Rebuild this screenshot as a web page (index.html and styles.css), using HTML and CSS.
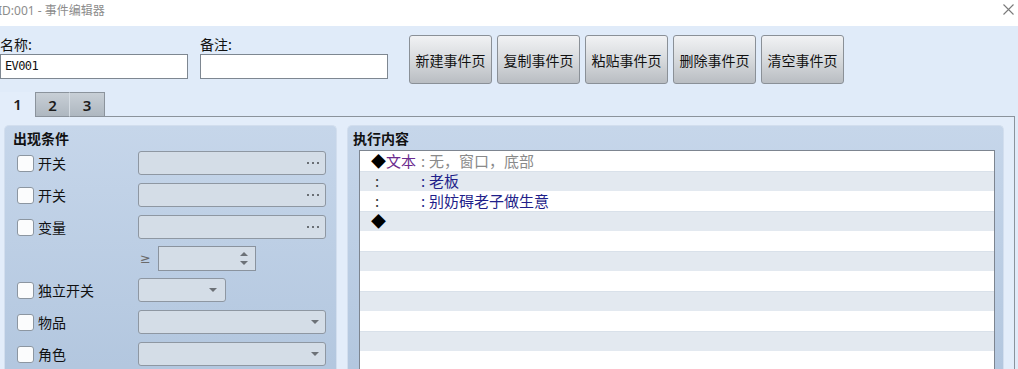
FILE: index.html
```html
<!DOCTYPE html>
<html lang="zh-CN">
<head>
    <meta charset="UTF-8">
    <meta name="viewport" content="width=device-width, initial-scale=1.0">
    <title>ID:001 - 事件编辑器</title>
    <link rel="stylesheet" href="styles.css">
</head>
<body>
    <div class="titlebar">
        <span class="title">ID:001 - 事件编辑器</span>
        <svg class="close" width="11" height="11" viewBox="0 0 11 11">
            <path d="M0.5 0.5 L10.5 10.5 M10.5 0.5 L0.5 10.5" stroke="#7a7a7a" stroke-width="1.1" fill="none"/>
        </svg>
    </div>

    <div class="main">
        <div class="top-row">
            <div class="field-group">
                <div class="label">名称:</div>
                <div class="text-input">EV001</div>
            </div>
            <div class="field-group second">
                <div class="label">备注:</div>
                <div class="text-input"></div>
            </div>
            <div class="buttons">
                <button class="btn">新建事件页</button>
                <button class="btn">复制事件页</button>
                <button class="btn">粘贴事件页</button>
                <button class="btn">删除事件页</button>
                <button class="btn">清空事件页</button>
            </div>
        </div>

        <div class="tabs">
            <div class="tab active">1</div>
            <div class="tab">2</div>
            <div class="tab last">3</div>
            <div class="tab-fill"></div>
        </div>

        <div class="tab-page">
            <!-- 出现条件 -->
            <div class="panel cond">
                <div class="panel-title">出现条件</div>
                <div class="cond-rows">
                    <div class="cond-row">
                        <div class="check-col"><span class="checkbox"></span>开关</div>
                        <div class="select wide"><span class="dots"><i></i><i></i><i></i></span></div>
                    </div>
                    <div class="cond-row">
                        <div class="check-col"><span class="checkbox"></span>开关</div>
                        <div class="select wide"><span class="dots"><i></i><i></i><i></i></span></div>
                    </div>
                    <div class="cond-row">
                        <div class="check-col"><span class="checkbox"></span>变量</div>
                        <div class="select wide"><span class="dots"><i></i><i></i><i></i></span></div>
                    </div>
                    <div class="cond-row spin-row">
                        <div class="check-col"></div>
                        <span class="ge">≥</span>
                        <div class="spin">
                            <span class="spin-arrows">
                                <span class="arrow up"></span>
                                <span class="arrow down"></span>
                            </span>
                        </div>
                    </div>
                    <div class="cond-row">
                        <div class="check-col"><span class="checkbox"></span>独立开关</div>
                        <div class="select short"><span class="arrow down"></span></div>
                    </div>
                    <div class="cond-row">
                        <div class="check-col"><span class="checkbox"></span>物品</div>
                        <div class="select wide"><span class="arrow down"></span></div>
                    </div>
                    <div class="cond-row">
                        <div class="check-col"><span class="checkbox"></span>角色</div>
                        <div class="select wide"><span class="arrow down"></span></div>
                    </div>
                </div>
            </div>

            <!-- 执行内容 -->
            <div class="panel exec">
                <div class="panel-title">执行内容</div>
                <div class="cmd-list">
                    <div class="cmd">
                        <span class="head"><span class="dia">◆</span><span class="kw">文本</span></span><span class="sep gray">:</span><span class="gray">无，窗口，底部</span>
                    </div>
                    <div class="cmd">
                        <span class="head"><span class="cont">:</span></span><span class="sep">:</span><span class="arg">老板</span>
                    </div>
                    <div class="cmd">
                        <span class="head"><span class="cont">:</span></span><span class="sep">:</span><span class="arg">别妨碍老子做生意</span>
                    </div>
                    <div class="cmd">
                        <span class="head"><span class="dia">◆</span></span>
                    </div>
                    <div class="cmd"></div>
                    <div class="cmd"></div>
                    <div class="cmd"></div>
                    <div class="cmd"></div>
                    <div class="cmd"></div>
                    <div class="cmd"></div>
                    <div class="cmd"></div>
                    <div class="cmd"></div>
                </div>
            </div>
        </div>
    </div>
</body>
</html>
```

FILE: styles.css
```css
body {
    margin: 0;
    width: 1018px;
    height: 369px;
    overflow: hidden;
    font-family: "Noto Sans CJK SC", "Noto Sans", sans-serif;
    font-size: 14px;
    color: #111;
    background: #e0ebf9;
}
.titlebar {
    height: 26px;
    background: #ffffff;
    display: flex;
    justify-content: space-between;
    align-items: flex-start;
}
.title {
    margin-left: -2px;
    font-family: "Noto Sans", "Noto Sans CJK SC", sans-serif;
    font-size: 12px;
    line-height: 22px;
    color: #8c8c8c;
}
.close {
    margin: 4px 4px 0 0;
}
.top-row {
    display: flex;
    align-items: flex-start;
    height: 58px;
}
.field-group {
    width: 188px;
    margin-top: 10px;
}
.field-group.second {
    margin-left: 12px;
}
.label {
    line-height: 16px;
    height: 16px;
    margin-bottom: 2px;
}
.text-input {
    box-sizing: border-box;
    height: 25px;
    background: #ffffff;
    border: 1px solid #7e8791;
    padding-left: 4px;
    font-family: "DejaVu Sans Mono", monospace;
    font-size: 12px;
    letter-spacing: -0.6px;
    line-height: 23px;
    color: #111;
}
.buttons {
    display: flex;
    gap: 5px;
    margin: 9px 0 0 21px;
}
.btn {
    box-sizing: border-box;
    width: 83px;
    height: 49px;
    padding: 0;
    font-family: inherit;
    font-size: 14px;
    color: #111;
    border: 1px solid #8a9097;
    border-radius: 3px;
    background: linear-gradient(#f1f2f4, #d7dadd 50%, #b9bdc2);
}
.tabs {
    display: flex;
    margin-top: 8px;
    width: 1015px;
    height: 25px;
}
.tab {
    box-sizing: border-box;
    width: 34px;
    height: 25px;
    text-align: center;
    line-height: 24px;
    font-family: "Noto Sans", sans-serif;
    font-weight: 600;
    font-size: 15px;
    color: #1c1c1c;
    border: 1px solid #8b939c;
    border-right: none;
    background: linear-gradient(#c8cfd6, #aeb7c0);
}
.tab.active {
    width: 35px;
    border: none;
    background: #e3edfa;
}
.tab.last {
    width: 36px;
    border-left-color: #d6dde4;
    border-right: 1px solid #8b939c;
}
.tab-fill {
    flex: 1;
    border-bottom: 1px solid #8b939c;
}
.tab-page {
    box-sizing: border-box;
    width: 1015px;
    height: 260px;
    display: flex;
    gap: 10px;
    padding: 8px 10px 0 4px;
    border-right: 1px solid #8b939c;
    background: #e3edfa;
}
.panel {
    box-sizing: border-box;
    border: 1px solid #d2deee;
    border-bottom: none;
    border-radius: 5px 5px 0 0;
    background: linear-gradient(#c6d6ea, #b3c7df 240px);
}
.cond {
    width: 333px;
    padding: 2px 0 0 8px;
}
.exec {
    flex: 1;
    padding: 2px 8px 0 5px;
}
.panel-title {
    font-size: 14px;
    font-weight: bold;
    line-height: 20px;
    color: #111;
}
.cond-rows {
    display: flex;
    flex-direction: column;
    gap: 8px;
    margin-top: 3px;
    padding-left: 4px;
}
.cond-row {
    display: flex;
    align-items: center;
    height: 24px;
}
.cond-row.spin-row {
    height: 25px;
    margin-top: -1px;
    margin-bottom: -1px;
}
.check-col {
    width: 121px;
    display: flex;
    align-items: center;
    font-size: 14px;
}
.checkbox {
    box-sizing: border-box;
    width: 17px;
    height: 17px;
    margin-right: 4px;
    background: #fbfcfd;
    border: 1px solid #8c96a1;
    border-radius: 3px;
}
.select,
.spin {
    box-sizing: border-box;
    height: 24px;
    border: 1px solid #8e97a2;
    border-radius: 3px;
    background: #d4dde7;
    display: flex;
    align-items: center;
    justify-content: flex-end;
}
.select.wide {
    width: 188px;
    padding-right: 6px;
}
.select.short {
    width: 88px;
    padding-right: 8px;
}
.dots {
    display: flex;
    gap: 3px;
}
.dots i {
    width: 2px;
    height: 2px;
    background: #6a6f75;
}
.ge {
    width: 18px;
    padding-left: 2px;
    font-family: "DejaVu Sans", sans-serif;
    font-size: 13px;
    color: #6a6a6a;
}
.spin {
    width: 98px;
    height: 25px;
    border-radius: 0;
    border-color: #8a939e;
    padding-right: 7px;
}
.spin-arrows {
    display: flex;
    flex-direction: column;
    gap: 5px;
}
.arrow {
    width: 0;
    height: 0;
    border-left: 4px solid transparent;
    border-right: 4px solid transparent;
}
.arrow.down {
    border-top: 4px solid #6c7177;
}
.arrow.up {
    border-bottom: 4px solid #6c7177;
}
.cmd-list {
    margin: 2px 0 0 6px;
    height: 240px;
    border: 1px solid #7d8590;
    border-bottom: none;
    background: #ffffff;
}
.cmd {
    height: 20px;
    line-height: 20px;
    font-size: 15px;
    white-space: nowrap;
    padding-left: 11px;
}
.cmd:nth-child(even) {
    background: #e3e9f0;
    box-shadow: inset 0 1px #d9e1ea;
}
.head {
    display: inline-block;
    width: 50px;
}
.dia {
    color: #000;
}
.kw {
    color: #6a2a8e;
}
.cont {
    padding-left: 4px;
    color: #333;
}
.sep {
    display: inline-block;
    width: 8px;
    color: #1f1f8a;
}
.gray {
    color: #8a8a8a;
}
.arg {
    color: #1f1f8a;
}
```
